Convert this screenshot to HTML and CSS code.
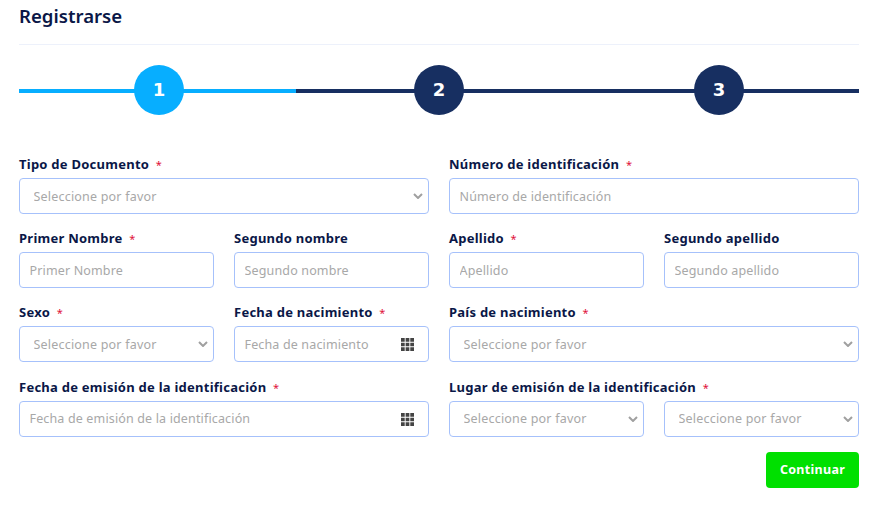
FILE: index.html
```html
<!DOCTYPE html>
<html lang="es">
  <head>
    <meta charset="UTF-8" />
    <meta name="viewport" content="width=device-width, initial-scale=1.0" />
    <title>Registrarse</title>
    <link rel="stylesheet" href="styles.css">
  </head>
  <body>
    <div class="page">
      <h1 class="title">Registrarse</h1>

      <div class="stepper">
        <div class="step-line"><div class="step-progress"></div></div>
        <div class="step"><span class="step-num active">1</span></div>
        <div class="step"><span class="step-num">2</span></div>
        <div class="step"><span class="step-num">3</span></div>
      </div>

      <form class="form-grid">
        <div class="field span-2">
          <label>Tipo de Documento <span class="req">*</span></label>
          <select><option>Seleccione por favor</option></select>
        </div>
        <div class="field span-2">
          <label>Número de identificación <span class="req">*</span></label>
          <input type="text" placeholder="Número de identificación" />
        </div>

        <div class="field">
          <label>Primer Nombre <span class="req">*</span></label>
          <input type="text" placeholder="Primer Nombre" />
        </div>
        <div class="field">
          <label>Segundo nombre</label>
          <input type="text" placeholder="Segundo nombre" />
        </div>
        <div class="field">
          <label>Apellido <span class="req">*</span></label>
          <input type="text" placeholder="Apellido" />
        </div>
        <div class="field">
          <label>Segundo apellido</label>
          <input type="text" placeholder="Segundo apellido" />
        </div>

        <div class="field">
          <label>Sexo <span class="req">*</span></label>
          <select><option>Seleccione por favor</option></select>
        </div>
        <div class="field">
          <label>Fecha de nacimiento <span class="req">*</span></label>
          <div class="date-input">
            <input type="text" placeholder="Fecha de nacimiento" />
            <svg class="cal-icon" width="13" height="13" viewBox="0 0 14 14">
              <path d="M0 0h4v4H0zM5 0h4v4H5zM10 0h4v4h-4zM0 5h4v4H0zM5 5h4v4H5zM10 5h4v4h-4zM0 10h4v4H0zM5 10h4v4H5zM10 10h4v4h-4z" fill="#444" />
            </svg>
          </div>
        </div>
        <div class="field span-2">
          <label>País de nacimiento <span class="req">*</span></label>
          <select><option>Seleccione por favor</option></select>
        </div>

        <div class="field span-2 last-row">
          <label>Fecha de emisión de la identificación <span class="req">*</span></label>
          <div class="date-input">
            <input type="text" placeholder="Fecha de emisión de la identificación" />
            <svg class="cal-icon" width="13" height="13" viewBox="0 0 14 14">
              <path d="M0 0h4v4H0zM5 0h4v4H5zM10 0h4v4h-4zM0 5h4v4H0zM5 5h4v4H5zM10 5h4v4h-4zM0 10h4v4H0zM5 10h4v4H5zM10 10h4v4h-4z" fill="#444" />
            </svg>
          </div>
        </div>
        <div class="field span-2 last-row">
          <label>Lugar de emisión de la identificación <span class="req">*</span></label>
          <div class="two-selects">
            <select><option>Seleccione por favor</option></select>
            <select><option>Seleccione por favor</option></select>
          </div>
        </div>
      </form>

      <div class="actions">
        <button class="continue-btn" type="button">Continuar</button>
      </div>
    </div>
  </body>
</html>
```

FILE: styles.css
```css
* {
  box-sizing: border-box;
}

body {
  margin: 0;
  background-color: #fff;
  font-family: "Noto Sans", sans-serif;
  color: #0b1a4a;
}

.page {
  padding: 0 19px;
}

.title {
  margin: 0;
  height: 45px;
  padding-top: 4px;
  font-size: 18.6px;
  line-height: 24px;
  font-weight: 600;
  color: #0a1747;
  border-bottom: 1px solid #edf1fb;
}

.stepper {
  position: relative;
  display: flex;
  margin-top: 20px;
  height: 50px;
}

.step-line {
  position: absolute;
  left: 0;
  right: 0;
  top: 24px;
  height: 4px;
  background-color: #172f61;
}

.step-progress {
  width: 33%;
  height: 4px;
  background-color: #07aeff;
}

.step {
  position: relative;
  flex: 1;
  display: flex;
  justify-content: center;
}

.step-num {
  width: 50px;
  height: 50px;
  border-radius: 50%;
  background-color: #172f61;
  color: #fff;
  font-family: "DejaVu Sans", sans-serif;
  font-size: 18px;
  font-weight: 700;
  line-height: 49px;
  text-align: center;
}

.step-num.active {
  background-color: #07aeff;
}

.form-grid {
  display: grid;
  grid-template-columns: repeat(4, 195px);
  column-gap: 20px;
  row-gap: 15px;
  margin-top: 40px;
}

.span-2 {
  grid-column: span 2;
}

.last-row {
  margin-top: 1px;
}

.field label {
  display: block;
  height: 23px;
  font-size: 13px;
  line-height: 19px;
  font-weight: 700;
  letter-spacing: 0.25px;
  color: #0a1747;
}

.req {
  margin-left: 3px;
  color: #e0113a;
  font-size: 11px;
  font-weight: 400;
}

.field input,
.field select {
  display: block;
  width: 100%;
  height: 36px;
  padding: 0 9.5px;
  background-color: #fff;
  border: 1px solid #a6c1fb;
  border-radius: 4px;
  font-family: "Noto Sans", sans-serif;
  font-size: 12.5px;
  letter-spacing: 0.15px;
  color: #a8a8a8;
  outline: none;
}

.field select {
  padding-left: 13.5px;
  letter-spacing: 0.2px;
  appearance: none;
  background-image: url("data:image/svg+xml,%3Csvg xmlns='http://www.w3.org/2000/svg' width='10' height='6' viewBox='0 0 10 6'%3E%3Cpath d='M1 1l4 4 4-4' fill='none' stroke='%23a0a0a0' stroke-width='2'/%3E%3C/svg%3E");
  background-repeat: no-repeat;
  background-position: right 5px center;
}

.field.last-row input,
.field.last-row select {
  padding-bottom: 2px;
}

.field input::placeholder {
  color: #a8a8a8;
  opacity: 1;
}

.date-input {
  position: relative;
}

.cal-icon {
  position: absolute;
  right: 15px;
  top: 12px;
}

.two-selects {
  display: grid;
  grid-template-columns: repeat(2, 195px);
  column-gap: 20px;
}

.actions {
  display: flex;
  justify-content: flex-end;
  margin-top: 15px;
}

.continue-btn {
  width: 93px;
  height: 36px;
  padding: 0 0 2px;
  background-color: #00e000;
  color: #fff;
  border: none;
  border-radius: 4px;
  font-family: "Noto Sans", sans-serif;
  font-size: 12.5px;
  font-weight: 700;
  letter-spacing: 0.3px;
  cursor: pointer;
}
```
